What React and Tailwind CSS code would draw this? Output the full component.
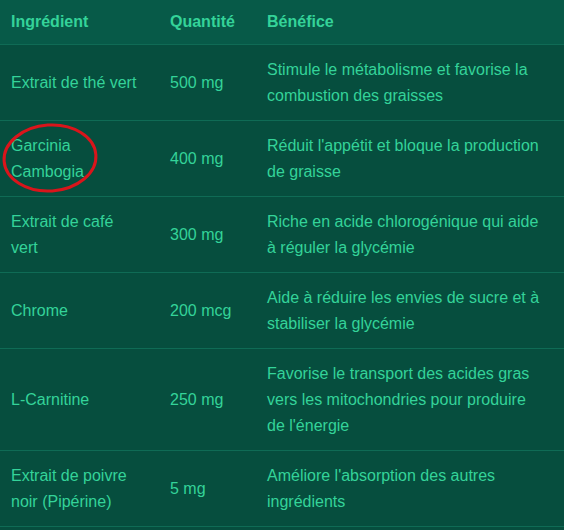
const rows = [
  { name: "Extrait de thé vert", qty: "500 mg", benefit: "Stimule le métabolisme et favorise la combustion des graisses" },
  { name: "Garcinia Cambogia", qty: "400 mg", benefit: "Réduit l'appétit et bloque la production de graisse", circled: true },
  { name: "Extrait de café vert", qty: "300 mg", benefit: "Riche en acide chlorogénique qui aide à réguler la glycémie" },
  { name: "Chrome", qty: "200 mcg", benefit: "Aide à réduire les envies de sucre et à stabiliser la glycémie" },
  { name: "L-Carnitine", qty: "250 mg", benefit: "Favorise le transport des acides gras vers les mitochondries pour produire de l'énergie" },
  { name: "Extrait de poivre noir (Pipérine)", qty: "5 mg", benefit: "Améliore l'absorption des autres ingrédients" },
];

export default function App() {
  return (
    <div className="w-[564px] h-[530px] overflow-hidden bg-[#064e3e] font-['Liberation_Sans',Arial,sans-serif] text-[16px] text-[#34d399]">
      <table className="w-full border-collapse table-fixed">
        <thead>
          <tr className="bg-[#075a48] border-b border-[#0f6b55]">
            <th className="w-[159px] pl-[11px] pr-[20px] h-[44px] text-left font-bold">Ingrédient</th>
            <th className="w-[97px] pl-[11px] pr-3 text-left font-bold">Quantité</th>
            <th className="pl-[11px] pr-[20px] text-left font-bold">Bénéfice</th>
          </tr>
        </thead>
        <tbody>
          {rows.map((r) => (
            <tr key={r.name} className="border-b border-[#0f6b55]">
              <td className="pl-[11px] pr-[20px] pt-3 pb-[11px] leading-[26px] align-middle">
                {r.circled ? (
                  <div className="relative">
                    <span className="block w-[90px]">{r.name}</span>
                    <svg className="absolute left-[-10px] top-[-11px] pointer-events-none" width="100" height="74" viewBox="0 0 100 74">
                      <ellipse cx="49" cy="36" rx="46" ry="33" fill="none" stroke="#d9151b" strokeWidth="3" transform="rotate(-4 49 36)" />
                    </svg>
                  </div>
                ) : (
                  r.name
                )}
              </td>
              <td className="pl-[11px] pr-3 pt-3 pb-[11px] leading-[26px] align-middle">{r.qty}</td>
              <td className="pl-[11px] pr-[20px] pt-3 pb-[11px] leading-[26px] align-middle">{r.benefit}</td>
            </tr>
          ))}
        </tbody>
      </table>
    </div>
  );
}
